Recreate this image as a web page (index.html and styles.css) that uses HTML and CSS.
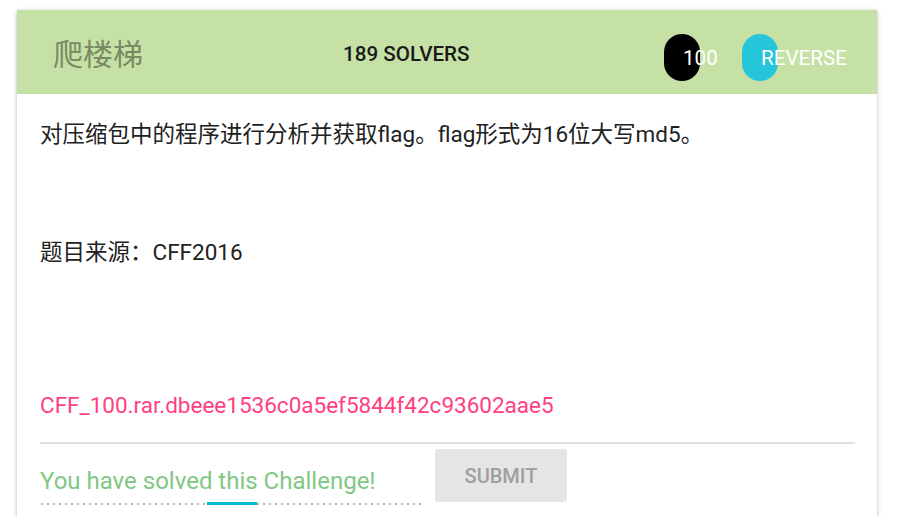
FILE: index.html
```html
<!DOCTYPE html>
<html lang="zh">
<head>
<meta charset="utf-8">
<link rel="stylesheet" href="styles.css">
</head>
<body>
<div class="card">
  <div class="card-header">
    <div class="title">爬楼梯</div>
    <div class="solvers">189 SOLVERS</div>
    <div class="tags">
      <span class="pill pill-score">100</span>
      <span class="pill pill-cat">REVERSE</span>
    </div>
  </div>
  <div class="card-body">
    <p class="desc">对压缩包中的程序进行分析并获取flag。flag形式为16位大写md5。</p>
    <p class="source">题目来源：CFF2016</p>
    <a class="file-link" href="#">CFF_100.rar.dbeee1536c0a5ef5844f42c93602aae5</a>
    <div class="divider"></div>
    <div class="answer-row">
      <div class="field">
        <span class="field-text">You have solved this Challenge!</span>
        <div class="field-line"><span class="field-active"></span></div>
      </div>
      <button class="submit" disabled>SUBMIT</button>
    </div>
  </div>
</div>
</body>
</html>
```

FILE: styles.css
```css
html, body {
  margin: 0;
  padding: 0;
  background: #ffffff;
}
body {
  font-family: Roboto, "Noto Sans CJK SC", sans-serif;
  padding: 10px 25px 0 17px;
}
.card {
  width: 860px;
  height: 507px;
  background: #fff;
  box-shadow: 0 2px 2px 0 rgba(0,0,0,0.14), 0 3px 1px -2px rgba(0,0,0,0.12), 0 1px 5px 0 rgba(0,0,0,0.2);
  display: flex;
  flex-direction: column;
}
.card-header {
  height: 84px;
  background: #c5e1a5;
  display: grid;
  grid-template-columns: 326px 321px auto;
  align-items: center;
}
.title {
  padding-left: 36px;
  font-size: 30px;
  color: #788964;
  font-family: "Noto Sans CJK SC", sans-serif;
}
.solvers {
  font-size: 20.6px;
  font-weight: 500;
  color: #1a1a1a;
  margin-top: 4px;
}
.tags {
  display: flex;
  gap: 42px;
  margin-top: 11px;
}
.pill {
  box-sizing: border-box;
  width: 36px;
  height: 47px;
  border-radius: 18px;
  padding-left: 19px;
  line-height: 49px;
  font-size: 20.6px;
  color: #fff;
  white-space: nowrap;
}
.pill-score { background: #000; }
.pill-cat { background: #26c6da; }
.card-body {
  padding: 0 22px 0 23px;
  display: flex;
  flex-direction: column;
}
.desc, .source {
  margin: 0;
  font-size: 22.5px;
  color: #212121;
  line-height: 32px;
}
.desc { margin-top: 24px; }
.source { margin-top: 86px; }
.file-link {
  margin-top: 122px;
  font-size: 22.5px;
  line-height: 30px;
  color: #ff4081;
  text-decoration: none;
}
.divider {
  margin-top: 22px;
  height: 2px;
  background: #e0e0e0;
}
.answer-row {
  display: flex;
  align-items: flex-start;
  margin-top: 5px;
  gap: 12px;
}
.field {
  width: 383px;
  padding-top: 17px;
}
.field-text {
  display: block;
  font-size: 24px;
  line-height: 30px;
  color: #81c784;
  white-space: nowrap;
}
.field-line {
  margin-top: 7px;
  margin-left: 1px;
  height: 2px;
  background-image: repeating-linear-gradient(to right, #b3b3b3 0 2px, transparent 2px 6px);
  position: relative;
}
.field-active {
  position: absolute;
  left: 166px;
  top: -1px;
  width: 50px;
  height: 3px;
  background: #00bcd4;
}
.submit {
  width: 132px;
  height: 53px;
  border: none;
  border-radius: 3px;
  background: #e5e5e5;
  color: #9f9f9f;
  font-family: Roboto, sans-serif;
  font-size: 20px;
  font-weight: 500;
  padding: 0;
}
```
